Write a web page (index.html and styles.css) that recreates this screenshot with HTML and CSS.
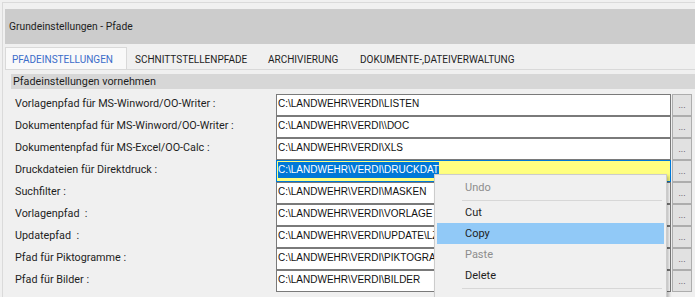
FILE: index.html
```html
<!DOCTYPE html>
<html lang="de">
<head>
    <meta charset="UTF-8">
    <title>Grundeinstellungen - Pfade</title>
    <link rel="stylesheet" href="styles.css">
</head>
<body>
    <div class="window">
        <div class="header">Grundeinstellungen - Pfade</div>

        <div class="tabs">
            <div class="tab active">PFADEINSTELLUNGEN</div>
            <div class="tab tab2">SCHNITTSTELLENPFADE</div>
            <div class="tab tab3">ARCHIVIERUNG</div>
            <div class="tab">DOKUMENTE-,DATEIVERWALTUNG</div>
        </div>

        <div class="section">Pfadeinstellungen vornehmen</div>

        <div class="rows">
            <div class="row">
                <div class="label">Vorlagenpfad für MS-Winword/OO-Writer :</div>
                <div class="field">C:\LANDWEHR\VERDI\LISTEN</div>
                <div class="browse">...</div>
            </div>
            <div class="row">
                <div class="label">Dokumentenpfad für MS-Winword/OO-Writer :</div>
                <div class="field">C:\LANDWEHR\VERDI\\DOC</div>
                <div class="browse">...</div>
            </div>
            <div class="row">
                <div class="label">Dokumentenpfad für MS-Excel/OO-Calc :</div>
                <div class="field">C:\LANDWEHR\VERDI\XLS</div>
                <div class="browse">...</div>
            </div>
            <div class="row">
                <div class="label">Druckdateien für Direktdruck :</div>
                <div class="field focused"><span class="selected">C:\LANDWEHR\VERDI\DRUCKDAT</span></div>
                <div class="browse">...</div>
            </div>
            <div class="row">
                <div class="label">Suchfilter :</div>
                <div class="field">C:\LANDWEHR\VERDI\MASKEN</div>
                <div class="browse">...</div>
            </div>
            <div class="row">
                <div class="label">Vorlagenpfad&nbsp; :</div>
                <div class="field">C:\LANDWEHR\VERDI\VORLAGE</div>
                <div class="browse">...</div>
            </div>
            <div class="row">
                <div class="label">Updatepfad&nbsp; :</div>
                <div class="field">C:\LANDWEHR\VERDI\UPDATE\LZ</div>
                <div class="browse">...</div>
            </div>
            <div class="row">
                <div class="label">Pfad für Piktogramme :</div>
                <div class="field">C:\LANDWEHR\VERDI\PIKTOGRAMME</div>
                <div class="browse">...</div>
            </div>
            <div class="row">
                <div class="label">Pfad für Bilder :</div>
                <div class="field">C:\LANDWEHR\VERDI\BILDER</div>
                <div class="browse">...</div>
            </div>
        </div>
    </div>

    <!-- context menu of the focused field -->
    <div class="menu">
        <div class="item disabled">Undo</div>
        <div class="sep"></div>
        <div class="item">Cut</div>
        <div class="item hover">Copy</div>
        <div class="item disabled">Paste</div>
        <div class="item">Delete</div>
        <div class="sep"></div>
    </div>
</body>
</html>
```

FILE: styles.css
```css
body {
    margin: 0;
    padding-top: 2px;
    width: 695px;
    height: 297px;
    overflow: hidden;
    position: relative;
    background-color: #f0f0f0;
    font-family: Roboto, 'Noto Sans', sans-serif;
    font-size: 11px;
    color: #1e1e1e;
}

.window {
    margin-left: 2px;
    padding: 6px 0 0 2px;
    border-top: 1px solid #dadada;
    border-left: 1px solid #dadada;
    height: 300px;
}

.header {
    height: 35px;
    line-height: 35px;
    padding-left: 4px;
    background-color: #cccccc;
    font-size: 10.3px;
}

.tabs {
    display: flex;
    align-items: flex-end;
    height: 25px;
    border-bottom: 1px solid #d9d9d9;
}

.tab {
    height: 19px;
    padding-top: 2px;
    line-height: 19px;
    padding-left: 8px;
    white-space: nowrap;
    font-size: 10px;
}

.tab.active {
    width: 114px;
    padding-left: 6px;
    border: 1px solid #d9d9d9;
    border-bottom: none;
    background-color: #f9f9f9;
    color: #3b6cc9;
}

.tab2 {
    width: 125px;
}

.tab3 {
    width: 84px;
}

.section {
    margin: 4px 0 0 6px;
    height: 15px;
    line-height: 15px;
    padding-left: 2px;
    background-color: #d7d7d7;
    font-size: 10.8px;
}

.rows {
    margin-top: 5px;
    padding-left: 10px;
    display: flex;
    flex-direction: column;
    gap: 2px;
}

.row {
    display: grid;
    grid-template-columns: 260px 395px 20px;
    column-gap: 1px;
    height: 20px;
}

.label {
    line-height: 20px;
    white-space: nowrap;
    font-size: 10.8px;
}

.field {
    border: 1px solid #7a7a7a;
    background-color: white;
    padding-left: 1px;
    line-height: 18px;
    white-space: nowrap;
    overflow: hidden;
    font-family: 'Liberation Sans', Arial, sans-serif;
    font-size: 10px;
    color: #111;
}

.field.focused {
    border-color: #0078d7;
    background-color: #ffff80;
}

.selected {
    display: inline-block;
    line-height: 16px;
    margin-top: 1px;
    background-color: #0078d7;
    color: white;
}

.browse {
    border: 1px solid #adadad;
    background-color: #e1e1e1;
    text-align: center;
    line-height: 20px;
    font-size: 9px;
    color: #4a4050;
}

.menu {
    position: absolute;
    left: 434px;
    top: 174px;
    width: 227px;
    height: 140px;
    padding: 2px;
    border: 1px solid #cccccc;
    background-color: #f0f0f0;
    box-shadow: 2px 2px 3px rgba(0, 0, 0, 0.25);
}

.item {
    height: 21px;
    line-height: 21px;
    padding-left: 28px;
    color: #1e1e1e;
}

.item.disabled {
    color: #8d8d8d;
}

.item.hover {
    background-color: #91c9f7;
}

.sep {
    height: 1px;
    margin: 2px 2px 1px 25px;
    background-color: #d7d7d7;
}
```
